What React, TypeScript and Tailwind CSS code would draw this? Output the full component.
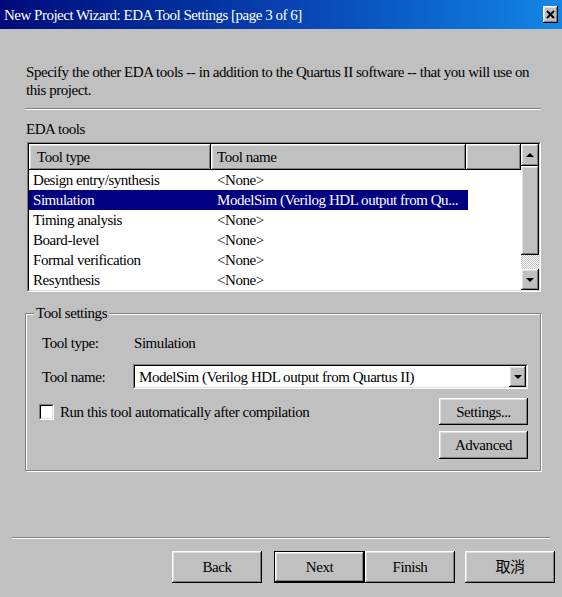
import { clsx } from 'clsx';
import type { ReactNode } from 'react';

const raised =
  'bg-[#c0c0c0] shadow-[inset_-1px_-1px_0_#000,inset_1px_1px_0_#fff,inset_-2px_-2px_0_#808080,inset_2px_2px_0_#dfdfdf]';

const rows = [
  ['Design entry/synthesis', '<None>'],
  ['Simulation', 'ModelSim (Verilog HDL output from Qu...'],
  ['Timing analysis', '<None>'],
  ['Board-level', '<None>'],
  ['Formal verification', '<None>'],
  ['Resynthesis', '<None>'],
];

function Sunken({ className, children }: { className?: string; children?: ReactNode }) {
  return (
    <div className={clsx('border border-t-[#808080] border-l-[#808080] border-b-white border-r-white', className)}>
      <div className="h-full w-full border border-t-black border-l-black border-b-[#dfdfdf] border-r-[#dfdfdf] bg-white">
        {children}
      </div>
    </div>
  );
}

function Arrow({ up }: { up?: boolean }) {
  return (
    <span
      className={clsx(
        'w-0 h-0 border-l-[4px] border-r-[4px] border-l-transparent border-r-transparent',
        up ? 'border-b-[4px] border-b-black' : 'border-t-[4px] border-t-black'
      )}
    />
  );
}

function Button({ children, def, className }: { children: ReactNode; def?: boolean; className?: string }) {
  return (
    <button
      type="button"
      className={clsx('flex items-center justify-center', raised, def && 'border border-black', className)}
    >
      {children}
    </button>
  );
}

export default function App() {
  return (
    <div className="w-[562px] h-[597px] overflow-hidden bg-[#c0c0c0] flex flex-col font-['Liberation_Serif','Noto_Sans_CJK_TC',serif] text-[15px] leading-[18px] tracking-[-0.45px] text-black">
      {/* title bar */}
      <div className="h-[29px] shrink-0 flex items-center justify-between pl-[4px] pr-[4px] bg-linear-to-r from-[#00087a] via-[#0a40b0] to-[#1586e6]">
        <span className="text-white tracking-[-0.5px]">New Project Wizard: EDA Tool Settings [page 3 of 6]</span>
        <div className={clsx('w-[15px] h-[17px] flex items-center justify-center', raised)}>
          <svg width="9" height="9" viewBox="0 0 9 9">
            <path d="M1 1L8 8M8 1L1 8" stroke="#000" strokeWidth="2" />
          </svg>
        </div>
      </div>

      <div className="flex flex-col pl-[25px] pr-[21px]">
        <p className="mt-[34px] pl-[1px] whitespace-nowrap">
          Specify the other EDA tools -- in addition to the Quartus II software -- that you will use on
          <br />
          this project.
        </p>
        <div className="mt-[9px] h-[2px] border-t border-t-[#808080] border-b border-b-white" />
        <div className="mt-[10px] pl-[1px]">EDA tools</div>

        {/* list view */}
        <Sunken className="mt-[4px] ml-[2px] h-[150px]">
          <div className="flex h-full">
            <div className="flex-1 flex flex-col">
              <div className="flex h-[26px] shrink-0">
                <div className={clsx('w-[182px] pl-[8px] flex items-center', raised)}>Tool type</div>
                <div className={clsx('w-[255px] pl-[6px] flex items-center', raised)}>Tool name</div>
                <div className={clsx('flex-1', raised)} />
              </div>
              {rows.map(([type, name], i) => (
                <div key={type} className="flex h-[20px]">
                  <div className={clsx('flex w-[439px] items-center', i === 1 && 'bg-[#000080] text-white')}>
                    <div className="w-[182px] pl-[4px] whitespace-nowrap">{type}</div>
                    <div className="flex-1 pl-[6px] whitespace-nowrap overflow-hidden">{name}</div>
                  </div>
                </div>
              ))}
            </div>
            {/* scrollbar */}
            <div className="w-[18px] flex flex-col">
              <div className={clsx('h-[22px] flex items-center justify-center', raised)}>
                <Arrow up />
              </div>
              <div className={clsx('h-[89px]', raised)} />
              <div className="flex-1 bg-[repeating-conic-gradient(#fff_0%_25%,#c0c0c0_0%_50%)] bg-[length:2px_2px]" />
              <div className={clsx('h-[21px] flex items-center justify-center', raised)}>
                <Arrow />
              </div>
            </div>
          </div>
        </Sunken>

        {/* tool settings group */}
        <div className="mt-[21px] h-[158px] border border-[#808080] shadow-[inset_1px_1px_0_#fff,1px_1px_0_#fff] flex flex-col">
          <span className="-mt-[10px] ml-[8px] self-start bg-[#c0c0c0] px-[2px]">Tool settings</span>
          <div className="mt-[12px] flex pl-[16px]">
            <span className="w-[91px]">Tool type:</span>
            <span className="pl-[1px]">Simulation</span>
          </div>
          <div className="mt-[12px] flex items-center pl-[16px] pr-[12px]">
            <span className="w-[91px]">Tool name:</span>
            <Sunken className="flex-1 h-[25px]">
              <div className="flex h-full items-center">
                <span className="flex-1 pl-[4px] whitespace-nowrap">ModelSim (Verilog HDL output from Quartus II)</span>
                <div className={clsx('w-[17px] h-full flex items-center justify-center', raised)}>
                  <Arrow />
                </div>
              </div>
            </Sunken>
          </div>
          <div className="mt-[9px] flex items-center pl-[13px] pr-[12px]">
            <Sunken className="w-[15px] h-[16px]" />
            <span className="ml-[6px]">Run this tool automatically after compilation</span>
            <div className="flex-1" />
            <Button className="w-[89px] h-[27px]">Settings...</Button>
          </div>
          <div className="mt-[6px] flex justify-end pr-[12px]">
            <Button className="w-[89px] h-[28px]">Advanced</Button>
          </div>
        </div>
      </div>

      <div className="mt-[66px] mx-[12px] h-[2px] border-t border-t-[#808080] border-b border-b-white" />

      <div className="mt-[12px] flex justify-end pr-[7px]">
        <Button className="w-[90px] h-[32px]">Back</Button>
        <Button def className="ml-[12px] w-[91px] h-[32px]">
          Next
        </Button>
        <Button className="w-[90px] h-[32px]">Finish</Button>
        <Button className="ml-[10px] w-[90px] h-[32px]">取消</Button>
      </div>
    </div>
  );
}
